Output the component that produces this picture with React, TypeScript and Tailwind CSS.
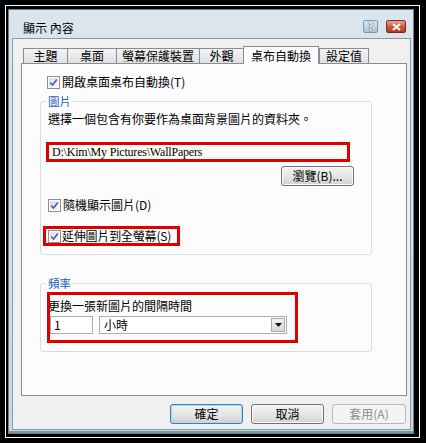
import React from 'react';

const cjk = "font-['Noto_Sans_CJK_TC','Noto_Sans',sans-serif]";

const tabs = [
  { label: '主題', cls: 'w-[45px]' },
  { label: '桌面', cls: 'w-[50px]' },
  { label: '螢幕保護裝置', cls: 'w-[84px]' },
  { label: '外觀', cls: 'w-[45px]' },
  { label: '桌布自動換', cls: 'w-[76px]', active: true },
  { label: '設定值', cls: 'w-[50px]' },
];

const CheckBox: React.FC = () => (
  <span className="flex h-[13px] w-[13px] shrink-0 items-center justify-center border border-[#8f8f8f] bg-white p-px">
    <span className="flex h-full w-full items-center justify-center bg-gradient-to-br from-[#dadfe6] to-[#f8f9fb]">
      <svg width="9" height="9" viewBox="0 0 9 9">
        <path d="M1.2 4.6 L3.6 7 L7.8 1.4" fill="none" stroke="#4b63a6" strokeWidth="1.7" />
      </svg>
    </span>
  </span>
);

const Button: React.FC<{ label: string; cls: string; variant?: 'default' | 'disabled' }> = ({ label, cls, variant }) => {
  const border =
    variant === 'default'
      ? 'border-[#3c7fb1] shadow-[inset_0_0_0_1px_#a8dcf5]'
      : variant === 'disabled'
        ? 'border-[#b5b9bc] text-[#8d8d8d]'
        : 'border-[#707070] shadow-[inset_0_0_0_1px_#fbfbfb]';
  return (
    <div
      className={`flex h-[20px] items-center justify-center rounded-[3px] border text-[12px] leading-[14px] ${cls} ${border} ${
        variant === 'disabled' ? 'bg-[#f4f4f4]' : 'bg-gradient-to-b from-[#f2f2f2] via-[#e6e6e6] to-[#d2d2d2]'
      }`}
    >
      {label}
    </div>
  );
};

export default function App() {
  return (
    <div className={`h-[443px] w-[426px] bg-black pt-[5px] pl-[5px] pr-[6px] pb-[5px] text-black ${cjk}`}>
      <div className="h-full border border-white">
        <div className="h-full border-black border-t-[3px] border-l-[2px] border-r-[5px] border-b-[3px]">
          {/* window */}
          <div className="flex h-full flex-col border border-[#6f7e8c] bg-gradient-to-b from-[#dbe5ee] via-[#d5e0ea] to-[#c8d8e2] pl-[3px] pr-[2px] pb-[3px] shadow-[inset_0_-2px_0_#6c9ea6]">
            {/* title bar */}
            <div className="flex h-[28px] shrink-0 items-start">
              <span className="ml-[11px] mt-[11px] text-[12px] leading-[14px]">顯示 內容</span>
              <div className="ml-auto mr-[5px] mt-[10px] flex gap-[8px]">
                <div className="flex h-[13px] w-[15px] items-center justify-center rounded-[2px] border border-[#7f98b4] bg-gradient-to-b from-[#dce8f4] to-[#a9c2da] text-[11px] font-bold leading-none text-white [text-shadow:0_0_1px_#2a3a55,0_0_1px_#2a3a55]">
                  ?
                </div>
                <div className="flex h-[13px] w-[20px] items-center justify-center rounded-[2px] border border-[#7a2a22] bg-gradient-to-b from-[#e3a295] via-[#cf5a48] to-[#b8321f]">
                  <svg width="9" height="8" viewBox="0 0 9 8">
                    <path d="M1 1 L8 7 M8 1 L1 7" stroke="white" strokeWidth="2" />
                  </svg>
                </div>
              </div>
            </div>

            {/* client */}
            <div className="flex flex-1 flex-col border border-[#8c99a6] bg-[#f0f0f0] pl-[8px] pr-[3px] pt-[7px] pb-[5px]">
              {/* tabs */}
              <div className="flex items-end pl-[2px]">
                {tabs.map((t) =>
                  t.active ? (
                    <div
                      key={t.label}
                      className={`relative z-10 -mb-px flex h-[18px] items-center justify-center border border-b-0 border-[#898c95] bg-[#fcfcfc] text-[12px] leading-[14px] ${t.cls}`}
                    >
                      {t.label}
                    </div>
                  ) : (
                    <div
                      key={t.label}
                      className={`-mr-px flex h-[15px] items-center justify-center border border-b-0 border-[#898c95] bg-gradient-to-b from-[#f3f3f3] to-[#e1e1e1] text-[12px] leading-[14px] ${t.cls}`}
                    >
                      {t.label}
                    </div>
                  ),
                )}
              </div>

              {/* panel */}
              <div className="flex h-[333px] flex-col border border-[#898c95] bg-[#fcfcfc]">
                <div className="ml-[25px] mt-[10px] flex h-[16px] items-center gap-[2px]">
                  <CheckBox />
                  <span className="text-[12px] leading-[14px]">開啟桌面桌布自動換(T)</span>
                </div>

                <fieldset className="ml-[18px] mt-[4px] flex w-[332px] flex-col rounded-[3px] border border-[#d5dfe5] pl-[7px] pb-[8px]">
                  <legend className="-ml-[2px] px-[2px] text-[11.5px] leading-[14px] text-[#1f5cbc]">圖片</legend>
                  <span className="mt-[3px] text-[12px] leading-[15px]">選擇一個包含有你要作為桌面背景圖片的資料夾。</span>
                  <div className="-ml-[2px] mt-[16px] flex h-[20px] w-[304px] items-center border-[3px] border-[#e00000] bg-[#fffdf6] pl-[3px]">
                    <span className="font-['Liberation_Serif',serif] text-[12px] leading-[14px] tracking-[-0.2px]">
                      {'D:\\Kim\\My Pictures\\WallPapers'}
                    </span>
                  </div>
                  <Button label="瀏覽(B)..." cls="mt-[4px] mr-[17px] self-end w-[73px] h-[18px]" />
                  <div className="mt-[11px] flex h-[16px] items-center gap-[2px]">
                    <CheckBox />
                    <span className="text-[12px] leading-[14px]">隨機顯示圖片(D)</span>
                  </div>
                  <div className="-ml-[5px] mt-[13px] flex h-[20px] w-[137px] items-center gap-[1px] border-[3px] border-[#e00000] pl-[2px]">
                    <CheckBox />
                    <span className="text-[12px] leading-[14px] tracking-[-0.2px]">延伸圖片到全螢幕(S)</span>
                  </div>
                </fieldset>

                <fieldset className="ml-[18px] mt-[21px] flex w-[332px] flex-col rounded-[3px] border border-[#d5dfe5] pl-[7px] pb-[8px]">
                  <legend className="-ml-[2px] px-[2px] text-[11.5px] leading-[14px] text-[#1f5cbc]">頻率</legend>
                  <div className="-ml-px mt-[2px] flex h-[51px] w-[251px] flex-col border-[3px] border-[#e00000] pt-[4px]">
                    <span className="-ml-[2px] text-[12px] leading-[14px]">更換一張新圖片的間隔時間</span>
                    <div className="mt-[3px] flex">
                      <div className="flex h-[18px] w-[43px] items-center border border-[#abadb3] bg-white pl-[3px] text-[12px] leading-[14px]">
                        1
                      </div>
                      <div className="ml-[6px] flex h-[18px] w-[188px] items-center border border-[#abadb3] bg-white pl-[4px] text-[12px] leading-[14px]">
                        小時
                        <div className="ml-auto mr-px flex h-[14px] w-[14px] items-center justify-center border border-[#a9a9a9] bg-gradient-to-b from-[#f3f3f3] to-[#d8d8d8]">
                          <svg width="7" height="4" viewBox="0 0 7 4">
                            <path d="M0 0 H7 L3.5 4 Z" fill="#111" />
                          </svg>
                        </div>
                      </div>
                    </div>
                  </div>
                </fieldset>
              </div>

              {/* buttons */}
              <div className="mt-[8px] mr-px flex justify-end">
                <Button label="確定" cls="w-[73px]" variant="default" />
                <Button label="取消" cls="ml-[8px] w-[73px]" />
                <Button label="套用(A)" cls="ml-[8px] w-[74px]" variant="disabled" />
              </div>
            </div>
          </div>
        </div>
      </div>
    </div>
  );
}
